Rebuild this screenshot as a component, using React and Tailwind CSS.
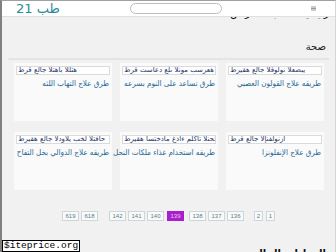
import React from "react";

const cards = [
  { t: "طرق علاج التهاب اللثه", a: "طرق علاج التهاب اللثه" },
  { t: "طرق تساعد على النوم بسرعه", a: "طرق تساعد على النوم بسرعه" },
  { t: "طريقه علاج القولون العصبي", a: "طريقه علاج القولون العصبي" },
  { t: "طريقه علاج الدوالي بخل التفاح", a: "طريقه علاج الدوالي بخل التفاح" },
  { t: "طريقه استخدام غذاء ملكات النحل", a: "طريقه استخدام غذاء ملكات النحل" },
  { t: "طرق علاج الإنفلونزا", a: "طرق علاج الإنفلونزا" },
];

function Btn({ n, active, w = "w-[17px]" }) {
  return (
    <div
      className={
        (active
          ? "bg-[#a81fcc] border-[#a81fcc] text-[#f3c6f5] "
          : "bg-[#f8fafa] border-[#cdd6da] text-[#5d7c88] ") +
        w +
        " h-[10px] border flex items-center justify-center text-[6px] leading-[6px] font-['Liberation_Sans',sans-serif]"
      }
    >
      {n}
    </div>
  );
}

export default function App() {
  return (
    <div className="w-[336px] h-[252px] overflow-hidden relative bg-[#f1f1f1] border-t border-t-[#a0a0a0] border-l-2 border-l-[#808080] border-r border-r-[#d6d6d6] font-['DejaVu_Sans',sans-serif]">
      <header className="h-[16px] bg-white flex items-center border-b border-b-[#e0e0e0]">
        <div dir="rtl" className="ml-[14px] w-[46px] text-left whitespace-nowrap text-[13px] leading-[16px] text-[#2d8a9b]">
          طب 21
        </div>
        <div className="ml-[68px] w-[92px] h-[11px] rounded-full border border-[#bdbdbd] bg-white" />
        <svg className="ml-auto mr-[19px]" width="5" height="5" viewBox="0 0 5 5">
          <rect x="0" y="0.5" width="5" height="1" fill="#9a9a9a" />
          <rect x="0" y="2" width="5" height="1" fill="#9a9a9a" />
          <rect x="0" y="3.5" width="5" height="1" fill="#9a9a9a" />
        </svg>
      </header>

      <div className="h-[5px] overflow-hidden">
        <div dir="rtl" className="-mt-[10px] text-[10px] leading-[14px] text-black whitespace-nowrap flex gap-[12px]">
          <span>الرئيسية</span>
          <span>طب</span>
          <span>أمراض</span>
        </div>
      </div>

      <div dir="rtl" className="mt-[19px] mx-[6px] pr-[3px] pb-[5px] border-b-2 border-b-[#e4e4e4] text-[10px] leading-[12px] text-[#222]">
        صحة
      </div>

      <div className="mt-[3px] ml-[12px] grid grid-cols-[98px_98px_98px] gap-x-[8px] gap-y-[11px]">
        {cards.map((c, i) => (
          <div key={i} className="h-[58px] bg-[#fafafa] pt-[3px]">
            <div className="mx-[2px] h-[9px] bg-white border border-[#dadada] overflow-hidden flex items-center">
              <div
                dir="ltr"
                className="[unicode-bidi:bidi-override] pl-[1px] text-[7px] leading-[7px] text-[#1b3468] whitespace-nowrap"
              >
                {c.a}
              </div>
            </div>
            <div dir="rtl" className="mt-[4px] pr-[3px] font-['DejaVu_Sans_Condensed','DejaVu_Sans',sans-serif] text-[8px] leading-[10px] text-[#246896] whitespace-nowrap">
              {c.t}
            </div>
          </div>
        ))}
      </div>

      <div className="mt-[21px] flex justify-center items-center">
        <div className="flex gap-[2px]">
          <Btn n="619" />
          <Btn n="618" />
        </div>
        <div className="ml-[11px] flex gap-[2px]">
          <Btn n="142" />
          <Btn n="141" />
          <Btn n="140" />
          <div className="ml-[1px] mr-[3px]">
            <Btn n="139" active />
          </div>
          <Btn n="138" />
          <Btn n="137" />
          <Btn n="136" />
        </div>
        <div className="ml-[10px] flex gap-[3px]">
          <Btn n="2" w="w-[9px]" />
          <Btn n="1" w="w-[9px]" />
        </div>
      </div>

      <div dir="rtl" className="mt-[27px] pr-[9px] text-[10px] leading-[12px] font-bold text-[#111] whitespace-nowrap">
        العمليات الحالية
      </div>

      <div className="absolute left-0 bottom-0 bg-white border border-black px-[1px] text-[9.5px] leading-[10px] text-black font-['Liberation_Mono',monospace]">
        $iteprice.org
      </div>
    </div>
  );
}
